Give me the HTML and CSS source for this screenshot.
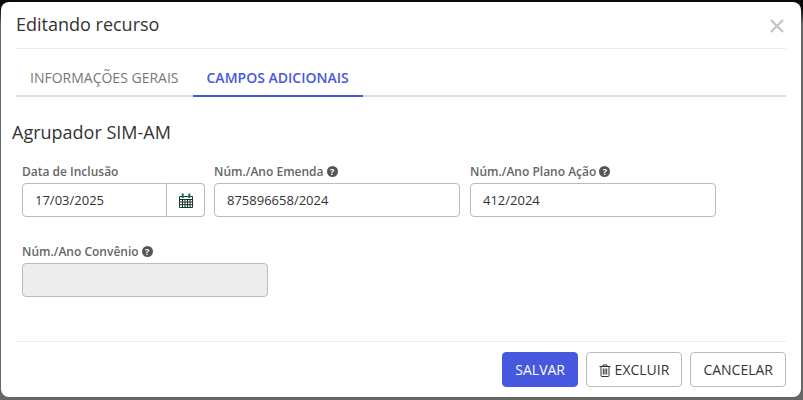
FILE: index.html
```html
<!DOCTYPE html>
<html lang="pt-BR">

<head>
    <meta charset="utf-8" />
    <title>Editando recurso</title>
    <link rel="stylesheet" href="styles.css">
</head>

<body>
    <div class="modal">
        <div class="modal-head">
            <h4>Editando recurso</h4>
            <span class="btnClose">
                <svg width="14" height="14" viewBox="0 0 14 14"><path d="M1 1L13 13M13 1L1 13" stroke="#c4c4c4" stroke-width="2.2" fill="none" /></svg>
            </span>
        </div>
        <div class="modal-tabs">
            <a href="#" class="tab">INFORMAÇÕES GERAIS</a>
            <a href="#" class="tab active">CAMPOS ADICIONAIS</a>
        </div>
        <div class="modal-content">
            <h3>Agrupador SIM-AM</h3>
            <div class="form-row">
                <div class="form-item item-date">
                    <label>Data de Inclusão</label>
                    <div class="date-group">
                        <input type="text" value="17/03/2025">
                        <span class="date-btn">
                            <svg width="14" height="15" viewBox="0 0 14 15">
                                <path d="M.5 3.5h13v11H.5zM.5 6.5h13M.5 9h13M.5 11.7h13M3.5 6.5v8M6 6.5v8M8.5 6.5v8M11 6.5v8" fill="none" stroke="#17352a" />
                                <path d="M2.7 .5h2v4.5h-2zM9.3 .5h2v4.5h-2z" fill="#0a7a3c" />
                            </svg>
                        </span>
                    </div>
                </div>
                <div class="form-item">
                    <label>Núm./Ano Emenda <span class="help">?</span></label>
                    <input type="text" value="875896658/2024">
                </div>
                <div class="form-item">
                    <label>Núm./Ano Plano Ação <span class="help">?</span></label>
                    <input type="text" value="412/2024">
                </div>
                <div class="form-item">
                    <label>Núm./Ano Convênio <span class="help">?</span></label>
                    <input type="text" disabled>
                </div>
            </div>
        </div>
        <div class="modal-foot">
            <button class="btn btn-primary">SALVAR</button>
            <button class="btn">
                <svg width="12" height="13" viewBox="0 0 12 13"><path d="M.5 2.5h11M2 2.5v9a1 1 0 0 0 1 1h6a1 1 0 0 0 1-1v-9M4 2.5V1h4v1.5M4.3 4.5v6M6 4.5v6M7.7 4.5v6" fill="none" stroke="#333" /></svg>
                EXCLUIR
            </button>
            <button class="btn">CANCELAR</button>
        </div>
    </div>
</body>

</html>
```

FILE: styles.css
```css
* {
    box-sizing: border-box;
}
body {
    margin: 0;
    height: 400px;
    overflow: hidden;
    padding: 2px 2px 3px 1px;
    background: linear-gradient(#0a0a0a 0, #0a0a0a 8px, #666 24px);
    font-family: "Open Sans", "Liberation Sans", sans-serif;
    color: #333;
}
.modal {
    display: flex;
    flex-direction: column;
    height: 395px;
    padding: 0 15px;
    background-color: #fff;
    border-radius: 8px;
}
.modal-head {
    display: flex;
    justify-content: space-between;
    align-items: center;
    height: 47px;
    padding-bottom: 2px;
    border-bottom: 1px solid #eee;
}
.modal-head h4 {
    margin: 0;
    font-size: 18px;
    font-weight: 400;
}
.btnClose {
    display: flex;
    margin: 3px 2px 0 0;
}
.modal-tabs {
    display: flex;
    height: 48px;
    border-bottom: 2px solid #ddd;
}
.tab {
    padding: 0 14px;
    height: 48px;
    line-height: 57px;
    font-size: 14px;
    font-weight: 500;
    text-decoration: none;
    color: #777;
}
.tab.active {
    font-weight: 600;
    color: #4658de;
    border-bottom: 2px solid #4658de;
}
.modal-content {
    flex: 1;
    margin-left: -4px;
}
.modal-content h3 {
    margin: 23px 0 16px;
    font-size: 18px;
    font-weight: 400;
    line-height: 25px;
}
.form-row {
    display: flex;
    flex-wrap: wrap;
    row-gap: 24px;
    padding-left: 10px;
}
.form-item {
    width: 256px;
}
.item-date {
    width: 192px;
}
.form-item label {
    display: block;
    font-size: 12px;
    font-weight: 600;
    line-height: 22px;
    color: #666;
}
.form-item input {
    display: block;
    width: 246px;
    height: 34px;
    padding: 0 12px;
    border: 1px solid #bbb;
    border-radius: 4px;
    font-family: inherit;
    font-size: 13px;
    color: #333;
}
.form-item input:disabled {
    background-color: #ececec;
}
.date-group {
    display: flex;
    width: 183px;
}
.form-item .date-group input {
    flex: 1;
    width: 0;
    border-radius: 4px 0 0 4px;
}
.date-btn {
    display: flex;
    align-items: center;
    justify-content: center;
    width: 38px;
    height: 34px;
    border: 1px solid #bbb;
    border-left: 0;
    border-radius: 0 4px 4px 0;
}
.help {
    display: inline-block;
    width: 11px;
    height: 11px;
    line-height: 11px;
    border-radius: 50%;
    background-color: #555;
    color: #fff;
    font-size: 9px;
    font-weight: 700;
    text-align: center;
    vertical-align: 1px;
}
.modal-foot {
    display: flex;
    justify-content: flex-end;
    gap: 8px;
    height: 56px;
    padding-top: 10px;
    border-top: 1px solid #eee;
}
.btn {
    height: 35px;
    padding: 0 12px;
    border: 1px solid #bbb;
    border-radius: 4px;
    background-color: #fff;
    font-family: inherit;
    font-size: 14px;
    color: #333;
}
.btn svg {
    vertical-align: -2px;
}
.btn-primary {
    border-color: #4658de;
    background-color: #4658de;
    color: #fff;
}
```
